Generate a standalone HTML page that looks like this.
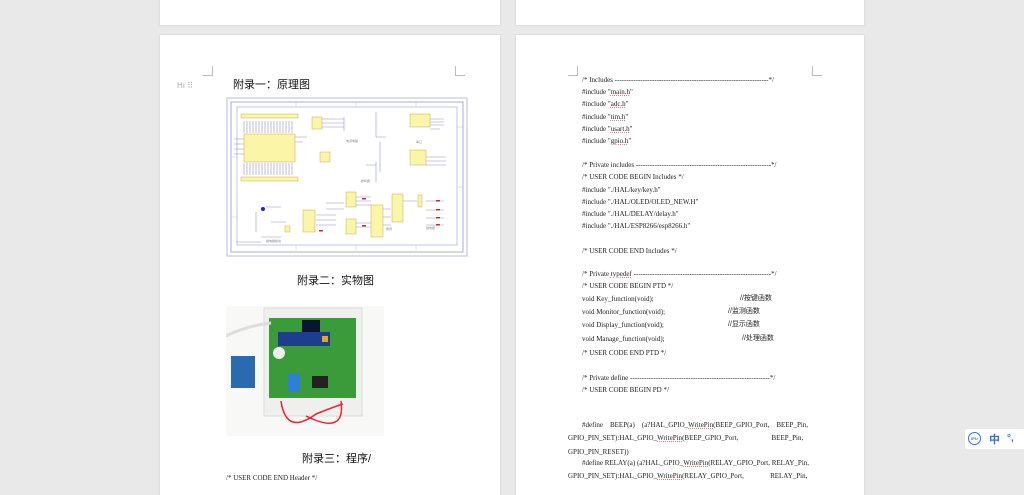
<!DOCTYPE html>
<html><head><meta charset="utf-8"><style>
body{margin:0;width:1024px;height:483px;background:#e9e9e9;position:relative;overflow:hidden;font-family:"Liberation Serif","Noto Serif CJK SC",serif}
.pg{position:absolute;background:#fff;box-shadow:0 0 2px rgba(0,0,0,.15)}
.t{position:absolute;font-size:7px;color:#222;white-space:pre;line-height:8px}
.h{position:absolute;font-family:"Liberation Sans","Noto Sans CJK SC",sans-serif;font-size:11px;color:#111}
.c{position:absolute;border-color:#bbb;border-style:solid;width:9px;height:9px}
.u{text-decoration:underline dotted #e77;text-decoration-thickness:1px}
</style></head><body>
<div class="pg" style="left:160px;top:0;width:340px;height:25px"></div>
<div class="pg" style="left:516px;top:0;width:348px;height:25px"></div>
<div class="pg" style="left:160px;top:35px;width:340px;height:460px"></div>
<div class="pg" style="left:516px;top:35px;width:348px;height:460px"></div>
<div class="c" style="left:203px;top:66px;border-width:0 1px 1px 0"></div>
<div class="c" style="left:455px;top:66px;border-width:0 0 1px 1px"></div>
<div class="c" style="left:568px;top:66px;border-width:0 1px 1px 0"></div>
<div class="c" style="left:812px;top:66px;border-width:0 0 1px 1px"></div>
<div style="position:absolute;left:177px;top:81px;font:8px 'Liberation Sans',sans-serif;color:#aaa">Hı ⠿</div>
<div class="h" style="left:233px;top:76px">附录一：原理图</div>
<svg style="position:absolute;left:226px;top:97px" width="242" height="160">
<rect x="1" y="1" width="240" height="158" fill="#fff" stroke="#b8b8e8"/>
<rect x="5" y="5" width="232" height="150" fill="none" stroke="#a8a8e0"/>
<rect x="11" y="10" width="220" height="138" fill="none" stroke="#c0c0ec"/>
<g stroke="#c0c0ec" stroke-width=".5"><path d="M70 5v5M130 5v5M190 5v5M70 148v5M130 148v5M190 148v5M5 60h6M5 120h6M231 30h6M231 90h6"/></g>
<g fill="#fbf5a8" stroke="#c9a94a" stroke-width=".5">
<rect x="18" y="37" width="51" height="28"/><rect x="15" y="17" width="57" height="4"/><rect x="15" y="80" width="57" height="4"/>
<rect x="184" y="17" width="20" height="13"/><rect x="184" y="53" width="16" height="15"/>
<rect x="94" y="55" width="10" height="10"/><rect x="145" y="108" width="12" height="32"/>
<rect x="120" y="95" width="10" height="15"/><rect x="120" y="122" width="10" height="15"/>
<rect x="166" y="97" width="11" height="28"/><rect x="77" y="113" width="12" height="22"/>
<rect x="192" y="98" width="4" height="12"/><rect x="59" y="129" width="5" height="6"/>
<rect x="86" y="20" width="10" height="12"/>
</g>
<g stroke="#9090d0" stroke-width=".6" fill="none">
<path d="M18 24v12M21 24v12M24 24v12M27 24v12M30 24v12M33 24v12M36 24v12M39 24v12M42 24v12M45 24v12M48 24v12M51 24v12M54 24v12M57 24v12M60 24v12M63 24v12M66 24v12"/>
<path d="M18 66v12M21 66v12M24 66v12M27 66v12M30 66v12M33 66v12M36 66v12M39 66v12M42 66v12M45 66v12M48 66v12M51 66v12M54 66v12M57 66v12M60 66v12M63 66v12M66 66v12"/>
<path d="M8 42h10M8 47h10M8 52h10M8 57h10M69 40h12M69 45h8"/>
<path d="M96 22h22M96 26h22M96 30h22M118 20v14M150 15v25M150 40h10M154 45v30M140 68h10M150 65v20M200 60h20M200 64h20M200 68h20M204 22h14M204 25h14M204 28h14M204 32h10M100 106h18M100 112h18M130 100h15M130 104h15M130 108h15M130 126h15M130 130h15M177 104h14M200 104h18M200 113h18M200 121h18M200 128h18M30 115v20M45 125h15M35 140h20M90 118h20M90 123h20M90 128h20M40 110h15M10 145h25M157 112h8M157 120h8M157 128h8"/>
</g>
<g font-size="3" fill="#888" font-family="Liberation Sans"><text x="120" y="45">电源电路</text><text x="190" y="46">串口</text><text x="135" y="85">蜂鸣器</text><text x="160" y="133">按键</text><text x="200" y="132">继电器</text><text x="40" y="145">继电器模块</text></g>
<g fill="#c03030"><rect x="210" y="103" width="4" height="1.5"/><rect x="210" y="112" width="4" height="1.5"/><rect x="210" y="120" width="4" height="1.5"/><rect x="210" y="127" width="4" height="1.5"/><rect x="93" y="133" width="4" height="1.5"/><rect x="136" y="101" width="4" height="1.5"/><rect x="136" y="128" width="4" height="1.5"/></g>
<circle cx="37" cy="112" r="2" fill="#22c"/>
</svg>
<div class="h" style="left:297px;top:272px">附录二：实物图</div>
<svg style="position:absolute;left:226px;top:306px" width="158" height="130">
<rect width="158" height="130" fill="#f8f8f6"/>
<rect x="38" y="2" width="98" height="108" fill="#efefee" stroke="#dcdcdc"/>
<rect x="43" y="12" width="87" height="80" fill="#3b9a3a"/>
<rect x="76" y="14" width="18" height="20" fill="#0b1530"/>
<rect x="52" y="26" width="52" height="14" fill="#1d3e8c"/>
<rect x="96" y="30" width="6" height="6" fill="#f0a020"/>
<circle cx="53" cy="47" r="6" fill="#eee"/>
<rect x="62" y="68" width="12" height="18" fill="#2e7fd6"/>
<rect x="86" y="70" width="16" height="12" fill="#222"/>
<rect x="5" y="50" width="24" height="32" fill="#2a6ab0"/>
<path d="M0 30 Q20 20 45 17" stroke="#ddd" stroke-width="3" fill="none"/>
<path d="M55 95 Q60 130 90 108 Q110 100 117 98" stroke="#e23" stroke-width="1.5" fill="none"/>
<path d="M115 95 Q120 130 80 110" stroke="#e23" stroke-width="1.5" fill="none"/>
</svg>
<div class="h" style="left:302px;top:450px">附录三：程序/</div>
<div class="t" style="left:226px;top:474px">/* USER CODE END Header */</div>

<div class="t" style="left:582px;top:76px">/* Includes ------------------------------------------------------------------*/</div>
<div class="t" style="left:582px;top:88px">#include "<span class="u">main.h</span>"</div>
<div class="t" style="left:582px;top:100px">#include "<span class="u">adc.h</span>"</div>
<div class="t" style="left:582px;top:113px">#include "<span class="u">tim.h</span>"</div>
<div class="t" style="left:582px;top:125px">#include "<span class="u">usart.h</span>"</div>
<div class="t" style="left:582px;top:137px">#include "<span class="u">gpio.h</span>"</div>
<div class="t" style="left:582px;top:161px">/* Private includes ----------------------------------------------------------*/</div>
<div class="t" style="left:582px;top:173px">/* USER CODE BEGIN Includes */</div>
<div class="t" style="left:582px;top:186px">#include "./HAL/key/key.h"</div>
<div class="t" style="left:582px;top:198px">#include "./HAL/OLED/OLED_NEW.H"</div>
<div class="t" style="left:582px;top:210px">#include "./HAL/DELAY/delay.h"</div>
<div class="t" style="left:582px;top:222px">#include "./HAL/ESP8266/esp8266.h"</div>
<div class="t" style="left:582px;top:247px">/* USER CODE END Includes */</div>
<div class="t" style="left:582px;top:270px">/* Private <span class="u">typedef</span> -----------------------------------------------------------*/</div>
<div class="t" style="left:582px;top:282px">/* USER CODE BEGIN PTD */</div>
<div class="t" style="left:582px;top:295px">void Key_function(void);</div><div class="t" style="left:740px;top:295px;font-family:'Liberation Sans','Noto Sans CJK SC',sans-serif">//按键函数</div>
<div class="t" style="left:582px;top:308px">void Monitor_function(void);</div><div class="t" style="left:728px;top:308px;font-family:'Liberation Sans','Noto Sans CJK SC',sans-serif">//监测函数</div>
<div class="t" style="left:582px;top:321px">void Display_function(void);</div><div class="t" style="left:728px;top:321px;font-family:'Liberation Sans','Noto Sans CJK SC',sans-serif">//显示函数</div>
<div class="t" style="left:582px;top:335px">void Manage_function(void);</div><div class="t" style="left:742px;top:335px;font-family:'Liberation Sans','Noto Sans CJK SC',sans-serif">//处理函数</div>
<div class="t" style="left:582px;top:349px">/* USER CODE END PTD */</div>
<div class="t" style="left:582px;top:374px">/* Private define ------------------------------------------------------------*/</div>
<div class="t" style="left:582px;top:386px">/* USER CODE BEGIN PD */</div>
<div class="t" style="left:582px;top:421px">#define    BEEP(a)    (a?HAL_GPIO_<span class="u">WritePin</span>(BEEP_GPIO_Port,    BEEP_Pin,</div>
<div class="t" style="left:568px;top:434px">GPIO_PIN_SET):HAL_GPIO_<span class="u">WritePin</span>(BEEP_GPIO_Port,                   BEEP_Pin,</div>
<div class="t" style="left:568px;top:448px">GPIO_PIN_RESET))</div>
<div class="t" style="left:582px;top:459px">#define RELAY(a) (a?HAL_GPIO_<span class="u">WritePin</span>(RELAY_GPIO_Port, RELAY_Pin,</div>
<div class="t" style="left:568px;top:472px">GPIO_PIN_SET):HAL_GPIO_<span class="u">WritePin</span>(RELAY_GPIO_Port,               RELAY_Pin,</div>

<div style="position:absolute;left:965px;top:429px;width:59px;height:20px;background:#fff;border-radius:3px 0 0 3px"></div>
<div style="position:absolute;left:968px;top:432px;width:11px;height:11px;border:1.5px solid #3a6cf0;border-radius:50%;font:bold 4px 'Liberation Sans',sans-serif;color:#3a6cf0;text-align:center;line-height:11px">IPU</div>
<div style="position:absolute;left:989px;top:431px;font:bold 11px 'Noto Sans CJK SC',sans-serif;color:#3a6cf0">中</div>
<div style="position:absolute;left:1007px;top:433px;font:bold 10px 'Liberation Sans',sans-serif;color:#3a6cf0">°,</div>
</body></html>
